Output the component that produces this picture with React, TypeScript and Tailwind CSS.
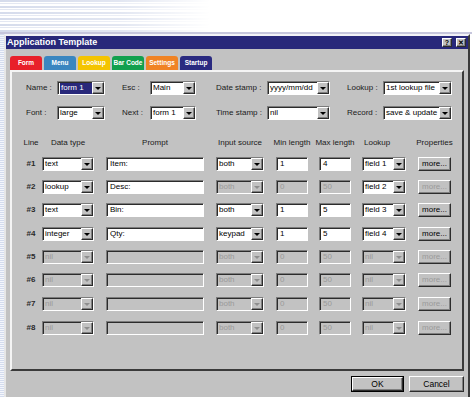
import React from 'react'

const sunken =
  'border border-t-[#7c7c7c] border-l-[#7c7c7c] border-b-white border-r-white shadow-[inset_1px_1px_0_#2c2c2c]'
const raised =
  'border border-t-white border-l-white border-b-[#2c2c2c] border-r-[#2c2c2c] shadow-[inset_-1px_-1px_0_#808080]'

interface ComboProps {
  value: string
  className: string
  disabled?: boolean
  hl?: boolean
}

const Arrow = ({ disabled }: { disabled?: boolean }) => (
  <div className={`w-[12px] h-full bg-[#c2c2c2] flex items-center justify-center ${raised}`}>
    <div
      className={`w-0 h-0 border-l-[3px] border-r-[3px] border-t-[3px] border-l-transparent border-r-transparent ${
        disabled ? 'border-t-[#8e8e8e]' : 'border-t-black'
      }`}
    />
  </div>
)

const Combo = ({ value, className, disabled, hl }: ComboProps) => (
  <div className={`${className} h-[14px] flex ${sunken} ${disabled ? 'bg-[#c2c2c2]' : 'bg-white'}`}>
    <div className="flex-1 flex items-center pl-[2px] overflow-hidden whitespace-nowrap">
      {hl ? (
        <span className="bg-[#28287a] text-white w-[33px] h-[11px] flex items-center pl-[1px]">{value}</span>
      ) : (
        <span className={disabled ? 'text-[#9a9a9a]' : 'text-black'}>{value}</span>
      )}
    </div>
    <Arrow disabled={disabled} />
  </div>
)

const TextBox = ({ value, className, disabled }: { value: string; className: string; disabled?: boolean }) => (
  <div
    className={`${className} h-[14px] flex items-center pl-[3px] whitespace-nowrap ${sunken} ${
      disabled ? 'bg-[#c2c2c2] text-[#9a9a9a]' : 'bg-white text-black'
    }`}
  >
    {value}
  </div>
)

const MoreButton = ({ disabled }: { disabled?: boolean }) => (
  <div
    className={`w-[33px] h-[14px] ml-[12px] flex items-center justify-center bg-[#c2c2c2] ${raised} ${
      disabled ? 'text-[#9a9a9a]' : 'text-black'
    }`}
  >
    more...
  </div>
)

const rows = [
  { line: '#1', type: 'text', prompt: 'Item:', src: 'both', min: '1', max: '4', lookup: 'field 1', state: 'on' },
  { line: '#2', type: 'lookup', prompt: 'Desc:', src: 'both', min: '0', max: '50', lookup: 'field 2', state: 'half' },
  { line: '#3', type: 'text', prompt: 'Bin:', src: 'both', min: '1', max: '5', lookup: 'field 3', state: 'on' },
  { line: '#4', type: 'integer', prompt: 'Qty:', src: 'keypad', min: '1', max: '5', lookup: 'field 4', state: 'on' },
  { line: '#5', type: 'nil', prompt: '', src: 'both', min: '0', max: '50', lookup: 'nil', state: 'off' },
  { line: '#6', type: 'nil', prompt: '', src: 'both', min: '0', max: '50', lookup: 'nil', state: 'off' },
  { line: '#7', type: 'nil', prompt: '', src: 'both', min: '0', max: '50', lookup: 'nil', state: 'off' },
  { line: '#8', type: 'nil', prompt: '', src: 'both', min: '0', max: '50', lookup: 'nil', state: 'off' },
]

// row tops in the original drift between 9 and 10px apart
const rowGaps = ['', 'mt-[9px]', 'mt-[9px]', 'mt-[10px]', 'mt-[9px]', 'mt-[9px]', 'mt-[10px]', 'mt-[10px]']

const tabs = [
  { name: 'Form', bg: 'bg-[#e8202a]' },
  { name: 'Menu', bg: 'bg-[#3a86c0]' },
  { name: 'Lookup', bg: 'bg-[#f4c400]' },
  { name: 'Bar Code', bg: 'bg-[#12a04e]' },
  { name: 'Settings', bg: 'bg-[#f08324]' },
  { name: 'Startup', bg: 'bg-[#2a2a80]' },
]

const App: React.FC = () => {
  return (
    <div className="w-[472px] h-[397px] overflow-hidden bg-white flex flex-col font-['Liberation_Sans',Arial,sans-serif] text-[8px] leading-none text-[#1a1a1a]">
      <div className="h-[34px] shrink-0 border-b-2 border-[#c6c6dc] bg-[image:linear-gradient(90deg,rgba(255,255,255,0)_0px,rgba(255,255,255,0.3)_120px,#ffffff_210px),repeating-linear-gradient(180deg,#d6dcec_0px,#d6dcec_2px,#ffffff_2px,#ffffff_3px,#e3e7f2_3px,#e3e7f2_4px,#ffffff_4px,#ffffff_6px)]" />

      <div className="flex flex-1">
        <div className="w-[4px] bg-[image:repeating-linear-gradient(180deg,#d4dcee_0px,#d4dcee_1px,#f4f6fb_1px,#f4f6fb_2px)]" />

        <div className="w-[466px] border-t-2 border-l-2 border-r-2 border-t-[#f2f2f6] border-l-[#e6e6e6] border-r-[#3a3a3a] bg-[#c2c2c2] flex flex-col">
          {/* title bar */}
          <div className="h-[13px] bg-[#28287a] flex items-center justify-between pl-[1px] pr-[2px]">
            <span className="text-white font-bold text-[9px]">Application Template</span>
            <div className="flex gap-[4px]">
              <div className={`w-[10px] h-[9px] bg-[#c2c2c2] ${raised} flex items-center justify-center text-black font-bold text-[7px]`}>?</div>
              <div className={`w-[10px] h-[9px] bg-[#c2c2c2] ${raised} flex items-center justify-center text-black font-bold text-[7px]`}>✕</div>
            </div>
          </div>

          <div className="pl-[4px] pt-[7px] flex flex-col">
            {/* tabs */}
            <div className="flex gap-[2px] h-[14px]">
              {tabs.map(t => (
                <div key={t.name} className={`${t.bg} w-[32px] rounded-t-[3px] flex items-center justify-center text-white font-bold text-[6.5px]`}>
                  {t.name}
                </div>
              ))}
            </div>

            {/* panel */}
            <div className="w-[454px] h-[301px] border-2 border-t-[#f4f4f4] border-l-[#f4f4f4] border-b-[#3a3a3a] border-r-[#3a3a3a] pt-[9px] pl-[8px] flex flex-col">
              <div className="pl-[6px] flex flex-col gap-[11px]">
                <div className="flex items-center h-[14px]">
                  <span className="w-[31px]">Name :</span>
                  <Combo className="w-[48px]" value="form 1" hl />
                  <span className="ml-[17px] w-[28px]">Esc :</span>
                  <Combo className="w-[46px]" value="Main" />
                  <span className="ml-[20px] w-[51px]">Date stamp :</span>
                  <Combo className="w-[63px]" value="yyyy/mm/dd" />
                  <span className="ml-[17px] w-[36px]">Lookup :</span>
                  <Combo className="w-[69px]" value="1st lookup file" />
                </div>
                <div className="flex items-center h-[14px]">
                  <span className="w-[31px]">Font :</span>
                  <Combo className="w-[48px]" value="large" />
                  <span className="ml-[17px] w-[28px]">Next :</span>
                  <Combo className="w-[46px]" value="form 1" />
                  <span className="ml-[20px] w-[51px]">Time stamp :</span>
                  <Combo className="w-[63px]" value="nil" />
                  <span className="ml-[17px] w-[36px]">Record :</span>
                  <Combo className="w-[69px]" value="save & update" />
                </div>
              </div>

              {/* table header */}
              <div className="flex items-center h-[12px] mt-[17px] whitespace-nowrap">
                <span className="w-[22px] text-center">Line</span>
                <span className="w-[52px] text-center">Data type</span>
                <span className="w-[98px] ml-[12px] text-center">Prompt</span>
                <span className="w-[48px] ml-[12px] text-center">Input source</span>
                <span className="w-[32px] ml-[12px] flex justify-center">Min length</span>
                <span className="w-[32px] ml-[11px] flex justify-center">Max length</span>
                <span className="w-[44px] ml-[11px] pl-[2px]">Lookup</span>
                <span className="w-[33px] ml-[12px] flex justify-center">Properties</span>
              </div>

              <div className="flex flex-col mt-[8px]">
                {rows.map((r, i) => {
                  const off = r.state === 'off'
                  const half = r.state !== 'on'
                  return (
                    <div key={r.line} className={`flex items-center h-[14px] ${rowGaps[i]}`}>
                      <span className="w-[22px] text-center font-bold text-[#2a2a2a]">{r.line}</span>
                      <Combo className="w-[52px]" value={r.type} disabled={off} />
                      <TextBox className="w-[98px] ml-[12px]" value={r.prompt} disabled={off} />
                      <Combo className="w-[48px] ml-[12px]" value={r.src} disabled={half} />
                      <TextBox className="w-[32px] ml-[12px]" value={r.min} disabled={half} />
                      <TextBox className="w-[32px] ml-[11px]" value={r.max} disabled={half} />
                      <Combo className="w-[44px] ml-[11px]" value={r.lookup} disabled={off} />
                      <MoreButton disabled={half} />
                    </div>
                  )
                })}
              </div>
            </div>

            {/* dialog buttons */}
            <div className="w-[454px] flex justify-end gap-[5px] mt-[5px]">
              <div className="w-[53px] h-[16px] border border-black">
                <div className={`w-full h-full bg-[#c2c2c2] ${raised} flex items-center justify-center text-black text-[8.5px]`}>OK</div>
              </div>
              <div className={`w-[55px] h-[16px] bg-[#c2c2c2] ${raised} flex items-center justify-center text-black text-[8.5px]`}>Cancel</div>
            </div>
          </div>
        </div>
      </div>
    </div>
  )
}

export default App
